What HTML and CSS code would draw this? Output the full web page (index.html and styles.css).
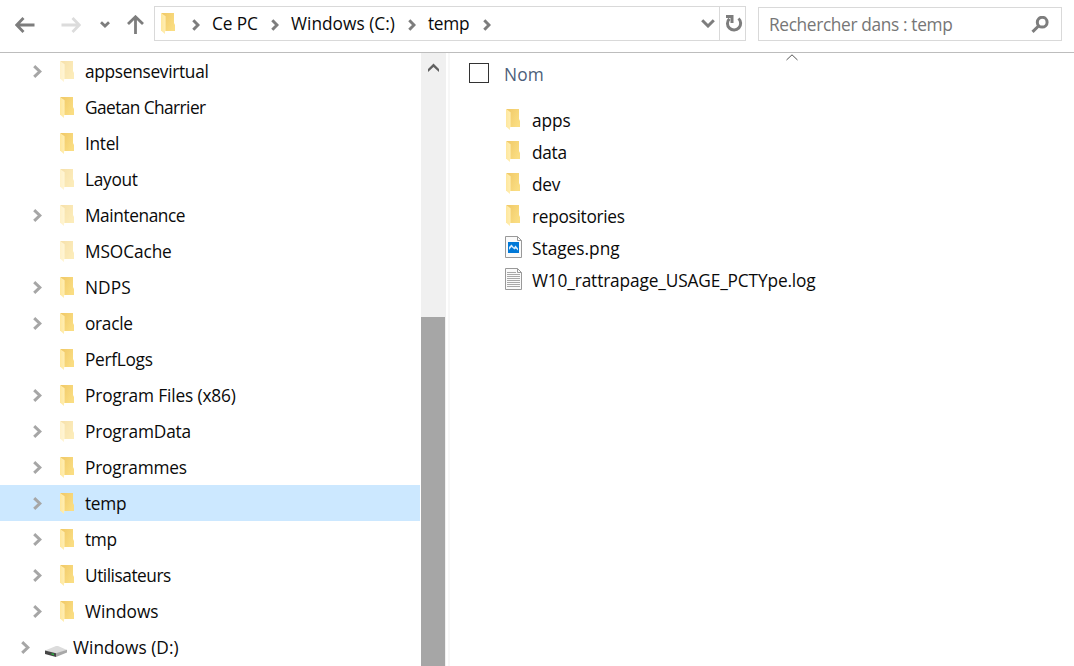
FILE: index.html
```
<!DOCTYPE html>
<html lang="fr">
<head>
<meta charset="utf-8">
<title>temp</title>
<link rel="stylesheet" href="styles.css">
</head>
<body>
<svg class="defs" width="0" height="0" aria-hidden="true">
  <defs>
    <linearGradient id="back" x1="0" y1="0" x2="1" y2="0.6"><stop offset="0" stop-color="#f0c866"/><stop offset="1" stop-color="#fadd82"/></linearGradient>
    <linearGradient id="flap" x1="0" y1="0" x2="1" y2="0"><stop offset="0" stop-color="#ffe79c"/><stop offset="1" stop-color="#ffeeb4"/></linearGradient>
    <symbol id="folder" viewBox="0 0 14 21"><path d="M0.5 0H13V10L14 12V18H0.5Z" fill="url(#back)"/><path d="M0 0L4.6 3.2V18L4 18.5V21L0 17.5Z" fill="url(#flap)"/></symbol>
    <symbol id="chev" viewBox="0 0 9 13"><path d="M1.2 1.2L6.8 6.5L1.2 11.8" fill="none" stroke="currentColor" stroke-width="3"/></symbol>
    <symbol id="crumb" viewBox="0 0 8 12"><path d="M1.3 1.3L6 6L1.3 10.7" fill="none" stroke="currentColor" stroke-width="3"/></symbol>
  </defs>
</svg>
<div class="window">
  <header class="toolbar">
    <nav class="history">
      <svg class="back" width="20" height="16" viewBox="0 0 20 16"><path d="M8.5 1L1.7 8L8.5 15M2 8H19.5" /></svg>
      <svg class="forward" width="20" height="16" viewBox="0 0 20 16"><path d="M11.5 1L18.3 8L11.5 15M18 8H0.5"/></svg>
      <svg class="recent" width="10" height="7" viewBox="0 0 10 7"><path d="M1 1.2L5 5L9 1.2"/></svg>
      <svg class="up" width="18" height="19" viewBox="0 0 18 19"><path d="M1 9L8.5 1.8L16 9M8.5 2V19"/></svg>
    </nav>
    <div class="address">
      <svg class="folder"><use href="#folder"/></svg>
      <svg class="crumb c1"><use href="#crumb"/></svg><span class="place p1">Ce PC</span>
      <svg class="crumb c2"><use href="#crumb"/></svg><span class="place p2">Windows (C:)</span>
      <svg class="crumb c3"><use href="#crumb"/></svg><span class="place p3">temp</span>
      <svg class="crumb c4"><use href="#crumb"/></svg>
      <svg class="drop" width="14" height="9" viewBox="0 0 14 9"><path d="M1.2 1.3L7 7L12.8 1.3"/></svg>
      <div class="refresh"><svg width="18" height="17" viewBox="0 0 18 17"><path d="M4.4 3.7A6.6 6.6 0 1 0 13.5 3.5"/><path d="M1 1.5H7V8"/></svg></div>
    </div>
    <div class="search"><span>Rechercher dans : temp</span>
      <svg width="18" height="17" viewBox="0 0 18 17"><circle cx="11.2" cy="6.2" r="4.9"/><path d="M7.5 10L1.5 15.8"/></svg>
    </div>
  </header>
  <main class="content">
    <ul class="tree">
      <li class="row pale"><svg class="chev"><use href="#chev"/></svg><svg class="folder"><use href="#folder"/></svg><span class="t1">appsensevirtual</span></li>
      <li class="row leaf"><svg class="folder"><use href="#folder"/></svg><span class="t2">Gaetan Charrier</span></li>
      <li class="row leaf"><svg class="folder"><use href="#folder"/></svg><span class="t3">Intel</span></li>
      <li class="row leaf pale"><svg class="folder"><use href="#folder"/></svg><span class="t4">Layout</span></li>
      <li class="row pale"><svg class="chev"><use href="#chev"/></svg><svg class="folder"><use href="#folder"/></svg><span class="t5">Maintenance</span></li>
      <li class="row leaf pale"><svg class="folder"><use href="#folder"/></svg><span class="t6">MSOCache</span></li>
      <li class="row"><svg class="chev"><use href="#chev"/></svg><svg class="folder"><use href="#folder"/></svg><span class="t7">NDPS</span></li>
      <li class="row"><svg class="chev"><use href="#chev"/></svg><svg class="folder"><use href="#folder"/></svg><span class="t8">oracle</span></li>
      <li class="row leaf"><svg class="folder"><use href="#folder"/></svg><span class="t9">PerfLogs</span></li>
      <li class="row"><svg class="chev"><use href="#chev"/></svg><svg class="folder"><use href="#folder"/></svg><span class="t10">Program Files (x86)</span></li>
      <li class="row pale"><svg class="chev"><use href="#chev"/></svg><svg class="folder"><use href="#folder"/></svg><span class="t11">ProgramData</span></li>
      <li class="row"><svg class="chev"><use href="#chev"/></svg><svg class="folder"><use href="#folder"/></svg><span class="t12">Programmes</span></li>
      <li class="row selected"><svg class="chev"><use href="#chev"/></svg><svg class="folder"><use href="#folder"/></svg><span class="t13">temp</span></li>
      <li class="row"><svg class="chev"><use href="#chev"/></svg><svg class="folder"><use href="#folder"/></svg><span class="t14">tmp</span></li>
      <li class="row"><svg class="chev"><use href="#chev"/></svg><svg class="folder"><use href="#folder"/></svg><span class="t15">Utilisateurs</span></li>
      <li class="row"><svg class="chev"><use href="#chev"/></svg><svg class="folder"><use href="#folder"/></svg><span class="t16">Windows</span></li>
      <li class="row drive"><svg class="chev"><use href="#chev"/></svg><svg class="disk" width="22" height="11" viewBox="0 0 22 11"><path d="M0 4.5L11 0H13L22 4L11 8Z" fill="#dcdcdc"/><path d="M0 4.5L11 7.2V11L0 8Z" fill="#454545"/><path d="M11 7.2L22 3.8V6.5L11 11Z" fill="#a8a8a8"/><path d="M6.5 7.2L9 7.8V9.2L6.5 8.6Z" fill="#25b83d"/></svg><span class="t17">Windows (D:)</span></li>
    </ul>
    <div class="scrollbar"><svg width="11" height="9" viewBox="0 0 11 9"><path d="M0 6L5.5 0.5L11 6V9L5.5 4L0 9Z" fill="#606060"/></svg><div class="thumb"></div></div>
    <section class="files">
      <svg class="sort" width="12" height="7" viewBox="0 0 12 7"><path d="M0.5 6L6 0.8L11.5 6"/></svg>
      <div class="heading"><i class="check"></i><span>Nom</span></div>
      <ul>
        <li><svg class="folder"><use href="#folder"/></svg><span class="f1">apps</span></li>
        <li><svg class="folder"><use href="#folder"/></svg><span class="f2">data</span></li>
        <li><svg class="folder"><use href="#folder"/></svg><span class="f3">dev</span></li>
        <li><svg class="folder"><use href="#folder"/></svg><span class="f4">repositories</span></li>
        <li><svg class="doc" width="17" height="22" viewBox="0 0 17 22"><path d="M.5 .5H12.5L16.5 4.5V21.5H.5Z" fill="#fafafa" stroke="#999"/><path d="M12.5 .5V4.5H16.5" fill="none" stroke="#999"/><path d="M3 6H14V17H3Z" fill="#0078d7"/><path d="M4 14V11L6.5 8.5L9 11.5L10.5 9.5L13 12.5V14.5L10.8 12.5L9.5 13.5L6.5 11Z" fill="#d5eafc"/></svg><span class="f5">Stages.png</span></li>
        <li><svg class="doc" width="17" height="22" viewBox="0 0 17 22"><path d="M.5 .5H12.5L16.5 4.5V21.5H.5Z" fill="#fafafa" stroke="#999"/><path d="M12.5 .5V4.5H16.5" fill="none" stroke="#999"/><path d="M2 4.5H11M2 6.5H15M2 8.5H15M2 10.5H15M2 12.5H15M2 14.5H15M2 16.5H15M2 18.5H15" stroke="#a8a8a8"/></svg><span class="f6">W10_rattrapage_USAGE_PCTYpe.log</span></li>
      </ul>
    </section>
  </main>
</div>
</body>
</html>
```
FILE: styles.css
```
* { box-sizing: border-box; }
body { margin: 0; background: #fff; color: #0a0a0a; font: 17.3px/24px "Open Sans", "Noto Sans", sans-serif; letter-spacing: -0.3px; overflow: hidden; }
ul { list-style: none; margin: 0; padding: 0; }
svg { display: block; flex: none; }
span { white-space: nowrap; }
.defs { position: absolute; }
.window { width: 1074px; height: 666px; display: flex; flex-direction: column; }
.folder { width: 14px; height: 21px; }
.toolbar { height: 53px; flex: none; display: flex; align-items: flex-start; border-bottom: 1px solid #bdbdbd; }
.history { width: 154px; height: 49px; display: flex; align-items: center; padding-left: 15px; }
.history path { fill: none; stroke: #7d7d7d; stroke-width: 2.8; }
.forward { margin-left: 26px; }
.history .forward path { stroke: #dcdcdc; }
.recent { margin-left: 19px; }
.up { margin-left: 17px; }
.address { width: 592px; height: 35px; margin-top: 6px; border: 1px solid #d9d9d9; display: flex; align-items: center; padding-left: 6px; }
.crumb { width: 8px; height: 12px; color: #7d7d7d; margin-top: 2px; }
.c1 { margin-left: 17px; }
.place { margin: 1px 0 0 12px; }
.p1 { width: 47px; letter-spacing: -0.1px; }
.c2 { margin-left: 12px; }
.p2 { width: 105px; letter-spacing: 0.03px; }
.c3 { margin-left: 12px; }
.p3 { width: 42px; }
.c4 { margin-left: 13px; }
.drop { margin-left: auto; margin-right: 4px; }
.drop path, .refresh path { fill: none; stroke: #7d7d7d; stroke-width: 3; }
.refresh { width: 26px; height: 33px; border-left: 1px solid #d9d9d9; display: flex; align-items: center; padding-left: 5px; }
.search { width: 304px; height: 34px; margin: 7px 0 0 12px; border: 1px solid #d9d9d9; display: flex; align-items: center; justify-content: space-between; padding: 0 12px 0 10px; color: #767676; letter-spacing: -0.35px; }
.search span { margin-top: 2px; }
.search circle, .search path { fill: none; stroke: #7d7d7d; stroke-width: 3; }
.content { flex: 1; display: flex; min-height: 0; }
.tree { width: 421px; overflow: hidden; }
.row { width: 420px; height: 36px; display: flex; align-items: center; padding-left: 32.5px; }
.row span { margin-left: 11px; margin-top: 2px; }
.row .folder { margin-top: 1px; }
.chev { width: 9px; height: 13px; color: #a6a6a6; margin-right: 18.5px; margin-top: 1px; }
.leaf { padding-left: 60px; }
.pale .folder { opacity: .55; }
.selected { background: #cce8ff; }
.drive { padding-left: 20.5px; }
.drive .chev { margin-right: 15.5px; }
.drive .disk { margin-top: 9px; }
.row.drive span { margin-left: 6px; }
.t2 { letter-spacing: -0.57px; }
.t5 { letter-spacing: -0.42px; }
.t6 { letter-spacing: -0.1px; }
.t7 { letter-spacing: 0.1px; }
.t10 { letter-spacing: -0.14px; }
.t11 { letter-spacing: -0.16px; }
.t12 { letter-spacing: -0.2px; }
.t15 { letter-spacing: -0.47px; }
.t16 { letter-spacing: 0; }
.t17 { letter-spacing: 0.03px; }
.f1 { letter-spacing: -0.05px; }
.f5 { letter-spacing: 0; }
.f6 { letter-spacing: -0.14px; }
.scrollbar { width: 25px; background: #f0f0f0; }
.scrollbar svg { margin: 10px 0 0 7px; }
.thumb { width: 24px; height: 349px; margin-top: 245px; background: #a6a6a6; }
.files { margin-left: 2px; border-left: 2px solid #f7f7f7; flex: 1; }
.sort { margin-left: 335.5px; padding-top: 1px; height: 8px; }
.sort path { fill: none; stroke: #555; }
.heading { display: flex; align-items: center; height: 24px; margin-left: 19px; color: #4c607a; }
.check { width: 20px; height: 20px; border: 1px solid #333; }
.heading span { margin-left: 15px; margin-top: 3px; letter-spacing: 0.2px; }
.files ul { margin-top: 20px; padding-left: 55px; }
.files li { height: 32px; display: flex; align-items: center; }
.files li span { margin-left: 12px; }
.files .folder { margin: -3px 0 0 1px; }
.doc { margin-top: -4px; }
.files .doc + span { margin-left: 10px; }
```
